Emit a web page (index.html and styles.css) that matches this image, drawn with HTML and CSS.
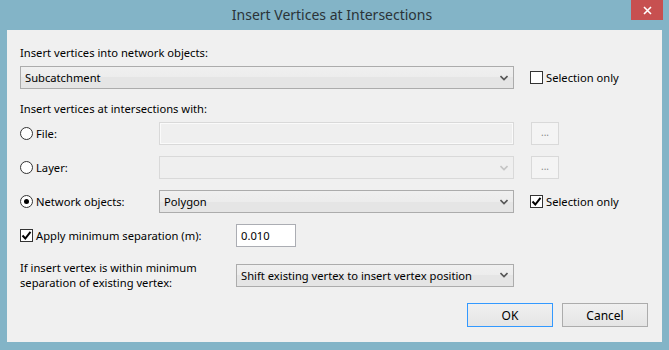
FILE: index.html
```html
<!DOCTYPE html>
<html lang="en">
<head>
  <meta charset="UTF-8">
  <title>Insert Vertices at Intersections</title>
  <link rel="stylesheet" href="styles.css">
</head>
<body>
  <div class="window">
    <div class="titlebar">
      <span class="title">Insert Vertices at Intersections</span>
      <button class="close" type="button">
        <svg width="9" height="9" viewBox="0 0 9 9"><path d="M1 1L8 8M8 1L1 8" stroke="#fff" stroke-width="1.6"/></svg>
      </button>
    </div>

    <div class="panel">
      <div class="label top">Insert vertices into network objects:</div>
      <div class="row">
        <div class="combo wide">
          <span>Subcatchment</span>
          <svg class="arrow" width="8" height="6" viewBox="0 0 8 6"><path d="M0.5 1L4 4.5L7.5 1" fill="none" stroke="#555" stroke-width="1.6"/></svg>
        </div>
        <label class="check side"><span class="box"></span>Selection only</label>
      </div>

      <div class="label section">Insert vertices at intersections with:</div>

      <div class="row line">
        <label class="radio opt"><span class="dot"></span>File:</label>
        <div class="textbox disabled"></div>
        <button class="browse" type="button" disabled>...</button>
      </div>

      <div class="row line">
        <label class="radio opt"><span class="dot"></span>Layer:</label>
        <div class="combo disabled">
          <span></span>
          <svg class="arrow" width="8" height="6" viewBox="0 0 8 6"><path d="M0.5 1L4 4.5L7.5 1" fill="none" stroke="#c4c4c4" stroke-width="1.6"/></svg>
        </div>
        <button class="browse" type="button" disabled>...</button>
      </div>

      <div class="row line">
        <label class="radio opt on"><span class="dot"></span>Network objects:</label>
        <div class="combo">
          <span>Polygon</span>
          <svg class="arrow" width="8" height="6" viewBox="0 0 8 6"><path d="M0.5 1L4 4.5L7.5 1" fill="none" stroke="#555" stroke-width="1.6"/></svg>
        </div>
        <label class="check side on"><span class="box"><svg width="11" height="11" viewBox="0 0 11 11"><path d="M1.5 5.5L4.3 8.5L9.5 1.8" fill="none" stroke="#000" stroke-width="2"/></svg></span>Selection only</label>
      </div>

      <div class="row sep">
        <label class="check opt-wide on"><span class="box"><svg width="11" height="11" viewBox="0 0 11 11"><path d="M1.5 5.5L4.3 8.5L9.5 1.8" fill="none" stroke="#000" stroke-width="2"/></svg></span>Apply minimum separation (m):</label>
        <div class="textbox small">0.010</div>
      </div>

      <div class="row within">
        <div class="label opt-wide">If insert vertex is within minimum<br>separation of existing vertex:</div>
        <div class="combo mid">
          <span>Shift existing vertex to insert vertex position</span>
          <svg class="arrow" width="8" height="6" viewBox="0 0 8 6"><path d="M0.5 1L4 4.5L7.5 1" fill="none" stroke="#555" stroke-width="1.6"/></svg>
        </div>
      </div>

      <div class="buttons">
        <button class="btn default" type="button">OK</button>
        <button class="btn" type="button">Cancel</button>
      </div>
    </div>
  </div>
</body>
</html>
```

FILE: styles.css
```css
* { box-sizing: border-box; }
body {
  margin: 0;
  font-family: 'Noto Sans', 'Open Sans', sans-serif;
  font-size: 11.2px;
  color: #000;
}
.window {
  width: 669px;
  height: 350px;
  background: #83b4c7;
  padding: 0 7px 8px 7px;
  display: flex;
  flex-direction: column;
}
.titlebar {
  height: 30px;
  position: relative;
  display: flex;
  justify-content: center;
  align-items: center;
}
.title {
  font-size: 14px;
  color: #2a3338;
  margin-left: -5px;
  padding-bottom: 1px;
}
.close {
  position: absolute;
  top: 0;
  right: -1px;
  width: 32px;
  height: 20px;
  border: none;
  background: #c75050;
  display: flex;
  align-items: center;
  justify-content: center;
  padding: 0;
}
.panel {
  flex: 1;
  background: #f0f0f0;
  padding: 15px 0 0 13px;
  display: flex;
  flex-direction: column;
}
.label {
  line-height: 15px;
}
.top { margin-bottom: 6px; }
.section { margin: 12px 0 6px; }
.row {
  display: flex;
  align-items: center;
}
.line { height: 23px; margin-bottom: 11px; }
.combo, .textbox {
  height: 23px;
  border: 1px solid #acacac;
  display: flex;
  align-items: center;
  padding: 0 0 0 4px;
  width: 355px;
}
.combo {
  background: linear-gradient(#f0f0f0 0%, #ececec 50%, #e5e5e5 50%, #e5e5e5 100%);
  justify-content: space-between;
}
.combo .arrow { margin-right: 5px; }
.combo.wide { width: 494px; }
.combo.mid { width: 278px; }
.combo.disabled,
.textbox.disabled {
  border-color: #d9d9d9;
  background: #efefef;
}
.textbox.disabled { box-shadow: inset 0 0 0 1px #fafafa; }
.textbox {
  background: #fff;
  border-color: #abadb3;
}
.textbox.small { width: 60px; }
.check, .radio {
  display: flex;
  align-items: center;
  line-height: 15px;
}
.box, .dot {
  width: 13px;
  height: 13px;
  border: 1px solid #333;
  background: #fff;
  margin-right: 3px;
  display: flex;
  align-items: center;
  justify-content: center;
  flex: none;
}
.dot { border-radius: 50%; }
.radio.on .dot::after {
  content: '';
  width: 5px;
  height: 5px;
  border-radius: 50%;
  background: #000;
}
.opt { width: 139px; }
.opt-wide { width: 216px; }
.side { margin-left: 16px; }
.browse {
  width: 28px;
  height: 23px;
  margin-left: 17px;
  border: 1px solid #d9d9d9;
  background: #f4f4f4;
  color: #8a8a8a;
  font-family: inherit;
  font-size: 10px;
  padding: 0 0 3px;
}
.sep { height: 23px; }
.within { margin-top: 13px; }
.buttons {
  display: flex;
  justify-content: flex-end;
  gap: 9px;
  margin: 13px 14px 0 0;
}
.btn {
  width: 86px;
  height: 24px;
  border: 1px solid #acacac;
  background: linear-gradient(#f0f0f0, #e5e5e5);
  font-family: inherit;
  font-size: 12px;
  color: #000;
  padding: 0;
}
.btn.default { border-color: #3399ff; }
```
